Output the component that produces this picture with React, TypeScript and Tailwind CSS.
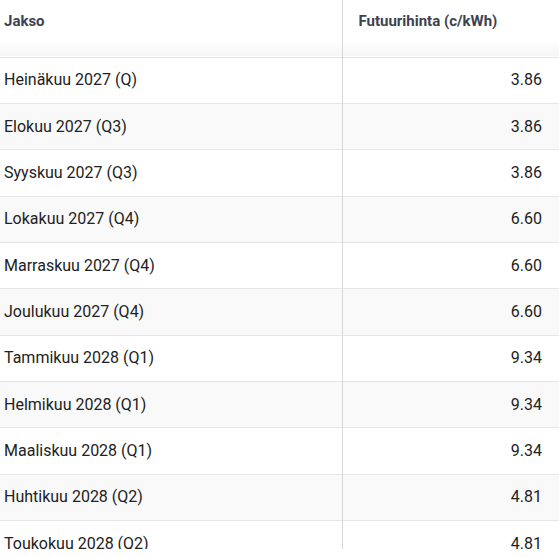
const rows: [string, string][] = [
  ["Heinäkuu 2027 (Q)", "3.86"],
  ["Elokuu 2027 (Q3)", "3.86"],
  ["Syyskuu 2027 (Q3)", "3.86"],
  ["Lokakuu 2027 (Q4)", "6.60"],
  ["Marraskuu 2027 (Q4)", "6.60"],
  ["Joulukuu 2027 (Q4)", "6.60"],
  ["Tammikuu 2028 (Q1)", "9.34"],
  ["Helmikuu 2028 (Q1)", "9.34"],
  ["Maaliskuu 2028 (Q1)", "9.34"],
  ["Huhtikuu 2028 (Q2)", "4.81"],
  ["Toukokuu 2028 (Q2)", "4.81"],
  ["Kesäkuu 2028 (Q2)", "4.81"],
];

export default function App() {
  return (
    <div className="w-[559px] h-[558px] bg-white font-['Roboto',sans-serif]">
      <div className="h-[549px] overflow-hidden">
        <table className="w-full border-collapse table-fixed">
          <thead>
            <tr className="h-[57px] bg-gradient-to-b from-white from-70% to-[#f6f6f6] border-b border-[#e3e3e3]">
              <th className="w-[342px] border-r border-[#d8d8d8] pl-[4px] pb-[15px] text-left text-[15px] font-bold text-[#3e4150]">
                Jakso
              </th>
              <th className="pl-[16px] pb-[15px] text-left text-[15px] font-bold text-[#3e4150]">
                Futuurihinta (c/kWh)
              </th>
            </tr>
          </thead>
          <tbody>
            {rows.map(([period, price], i) => (
              <tr
                key={period}
                className={`h-[46.35px] border-b border-[#e6e6e6] ${i % 2 === 1 ? "bg-[#f9f9f9]" : "bg-white"}`}
              >
                <td className="border-r border-[#d8d8d8] pl-[4px] text-[16px] text-[#222]">{period}</td>
                <td className="pr-[17px] text-right text-[16px] text-[#222]">{price}</td>
              </tr>
            ))}
          </tbody>
        </table>
      </div>
    </div>
  );
}
